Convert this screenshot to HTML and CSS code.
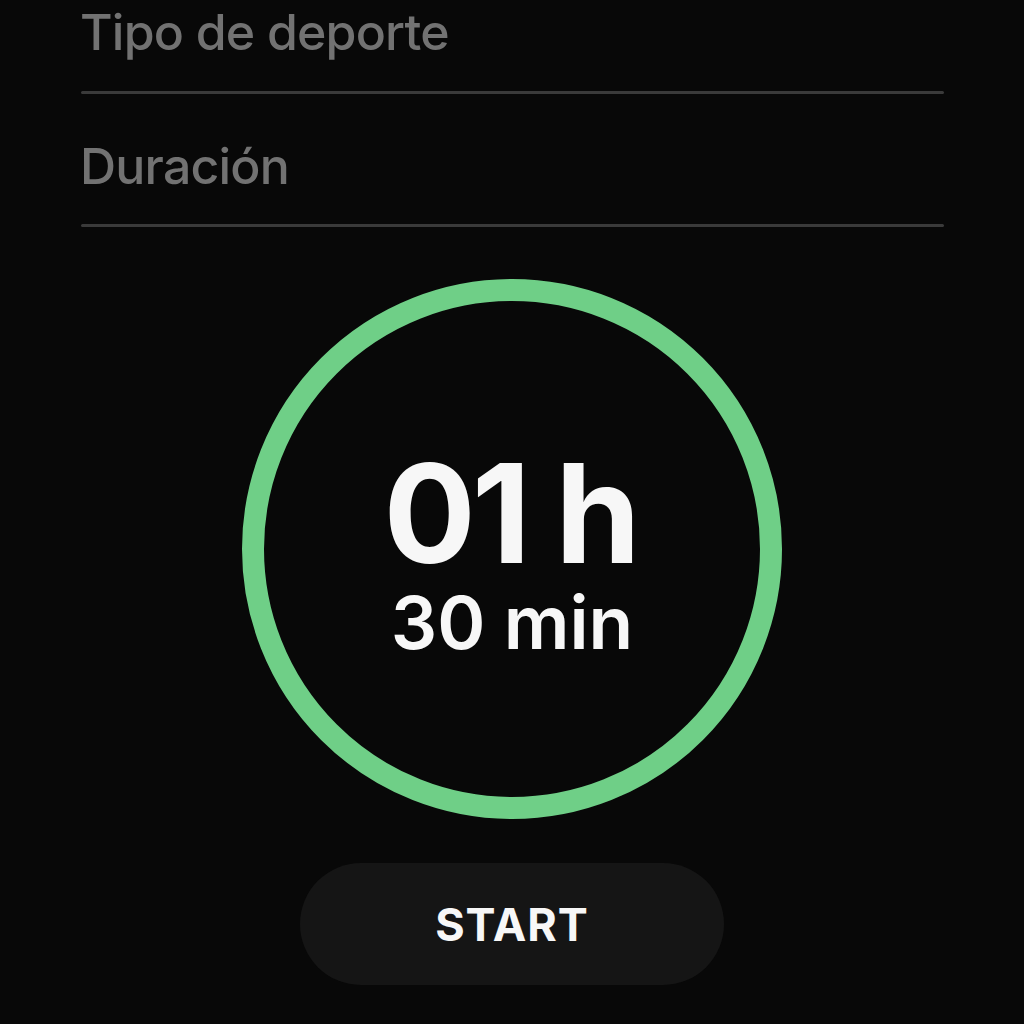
FILE: index.html
```html
<!DOCTYPE html>
<html lang="es">
<head>
<meta charset="utf-8">
<title>Temporizador</title>
<link rel="stylesheet" href="styles.css">
</head>
<body>
<main class="screen">
  <div class="field field-first">
    <div class="field-label">Tipo de deporte</div>
    <div class="field-line"></div>
  </div>
  <div class="field field-second">
    <div class="field-label">Duración</div>
    <div class="field-line"></div>
  </div>
  <div class="timer">
    <div class="ring">
      <div class="hours">01 h</div>
      <div class="minutes">30 min</div>
    </div>
  </div>
  <div class="actions">
    <button class="start-btn" type="button">START</button>
  </div>
</main>
</body>
</html>
```

FILE: styles.css
```css
* { box-sizing: border-box; }
html, body {
  margin: 0;
  padding: 0;
  background: #080808;
  height: 1024px;
  overflow: hidden;
}
body {
  font-family: Inter, "Noto Sans", "Liberation Sans", sans-serif;
  color: #f5f5f5;
}
.screen {
  width: 1024px;
  display: flex;
  flex-direction: column;
}
.field {
  padding: 0 80px 0 80px;
  display: flex;
  flex-direction: column;
}
.field-first { margin-top: 2px; }
.field-second { margin-top: 42px; }
.field-label {
  font-size: 50px;
  line-height: 60px;
  font-weight: 500;
  color: #727272;
  letter-spacing: -0.8px;
}
.field-line {
  margin-top: 29px;
  margin-left: 1px;
  height: 3px;
  width: 863px;
  border-radius: 2px;
  background: #3a3a3a;
}
.field-second .field-line { margin-top: 28px; }
.timer {
  display: flex;
  justify-content: center;
  margin-top: 52px;
}
.ring {
  width: 540px;
  height: 540px;
  border-radius: 50%;
  border: 22px solid #6fcf87;
  display: flex;
  flex-direction: column;
  align-items: center;
  padding-top: 160px;
}
.hours {
  font-size: 137px;
  line-height: 104px;
  font-weight: 700;
  letter-spacing: -4px;
  color: #f7f7f7;
  margin-left: -4px;
}
.minutes {
  margin-top: 22px;
  font-size: 73px;
  line-height: 72px;
  font-weight: 600;
  color: #f7f7f7;
}
.actions {
  display: flex;
  justify-content: center;
  margin-top: 44px;
}
.start-btn {
  width: 424px;
  height: 122px;
  border-radius: 61px;
  border: none;
  background: #151515;
  color: #f7f7f7;
  font-family: Inter, "Noto Sans", "Liberation Sans", sans-serif;
  font-size: 45px;
  font-weight: 700;
  letter-spacing: 1px;
  padding: 0;
}
```
